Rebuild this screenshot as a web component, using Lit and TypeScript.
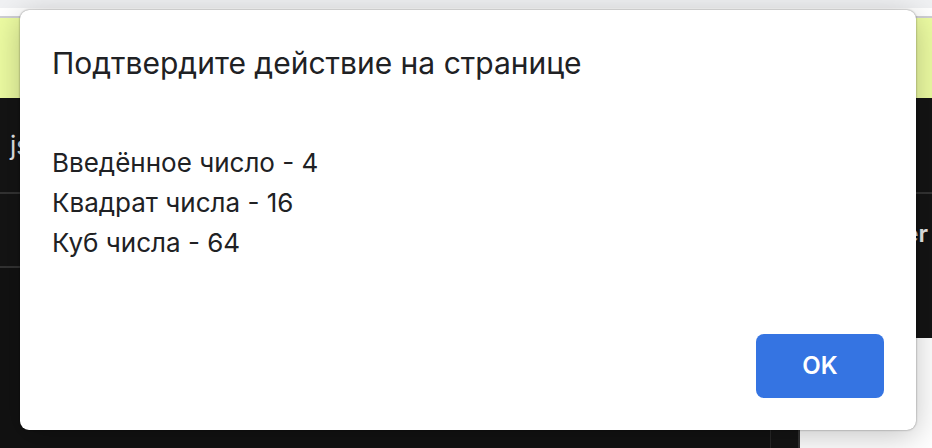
import { LitElement, html, css } from "lit";
import { customElement, property } from "lit/decorators.js";

@customElement("editor-backdrop")
export class EditorBackdrop extends LitElement {
  static styles = css`
    :host {
      display: flex;
      flex-direction: column;
      min-width: 0;
      background: #141414;
      color: #e8e8e8;
    }
    .window-bar {
      height: 8px;
      background: #f0f1f3;
    }
    .toolbar {
      height: 8px;
      background: #fff;
      border-bottom: 2px solid #cfcfd4;
    }
    .banner {
      height: 80px;
      background: #edfca2;
    }
    .tabs {
      display: flex;
      align-items: center;
      height: 94px;
      padding: 0 10px;
      border-bottom: 2px solid #333;
      font-size: 26px;
    }
    .panes {
      flex: 1;
      display: grid;
      grid-template-columns: 1fr 134px;
    }
    .code,
    .side {
      display: flex;
      flex-direction: column;
    }
    .files {
      height: 72px;
      border-bottom: 2px solid #333;
    }
    .lines {
      flex: 1;
      margin-right: 27px;
      border-right: 1px solid #282828;
      background: #121212;
    }
    .side-head {
      height: 144px;
      box-sizing: border-box;
      padding: 24px 4px;
      text-align: right;
      font-size: 24px;
      line-height: 32px;
      font-weight: 600;
    }
    .preview {
      flex: 1;
      background: #fff;
      border-left: 2px solid #333;
    }
  `;

  render() {
    return html`
      <div class="window-bar"></div>
      <div class="toolbar"></div>
      <div class="banner"></div>
      <div class="tabs">js</div>
      <div class="panes">
        <div class="code">
          <div class="files"></div>
          <div class="lines"></div>
        </div>
        <div class="side">
          <div class="side-head">er</div>
          <div class="preview"></div>
        </div>
      </div>
    `;
  }
}

@customElement("alert-dialog")
export class AlertDialog extends LitElement {
  @property() heading = "";
  @property({ attribute: false }) lines: string[] = [];

  static styles = css`
    :host {
      display: flex;
    }
    .dialog {
      flex: 1;
      display: flex;
      flex-direction: column;
      padding: 32px;
      border-radius: 9px;
      background: #fff;
      color: #202124;
      box-shadow: 0 0 2px rgba(0, 0, 0, 0.5), 0 6px 32px rgba(0, 0, 0, 0.24);
    }
    h1 {
      margin: 0;
      font-size: 30px;
      line-height: 42px;
      font-weight: 400;
    }
    .message {
      margin: 59px 0 32px;
      font-size: 26px;
      line-height: 40px;
    }
    p {
      margin: 0;
    }
    button {
      align-self: flex-end;
      margin-top: auto;
      width: 128px;
      height: 64px;
      padding: 0 0 2px;
      border: 0;
      border-radius: 8px;
      background: #3574e2;
      color: #fff;
      font: inherit;
      font-size: 24px;
      font-weight: 600;
    }
  `;

  render() {
    return html`
      <div class="dialog" role="alertdialog" aria-labelledby="heading" aria-describedby="message">
        <h1 id="heading">${this.heading}</h1>
        <div class="message" id="message">${this.lines.map((line) => html`<p>${line}</p>`)}</div>
        <button type="button">OK</button>
      </div>
    `;
  }
}

@customElement("app-root")
export class AppRoot extends LitElement {
  static styles = css`
    :host {
      display: grid;
      min-height: 100vh;
      overflow: hidden;
      font-family: Inter, "Liberation Sans", sans-serif;
    }
    editor-backdrop,
    alert-dialog {
      grid-area: 1 / 1;
    }
    alert-dialog {
      z-index: 1;
      margin: 10px 16px 18px 20px;
    }
  `;

  private lines = ["Введённое число - 4", "Квадрат числа - 16", "Куб числа - 64"];

  render() {
    return html`
      <editor-backdrop></editor-backdrop>
      <alert-dialog heading="Подтвердите действие на странице" .lines=${this.lines}></alert-dialog>
    `;
  }
}
